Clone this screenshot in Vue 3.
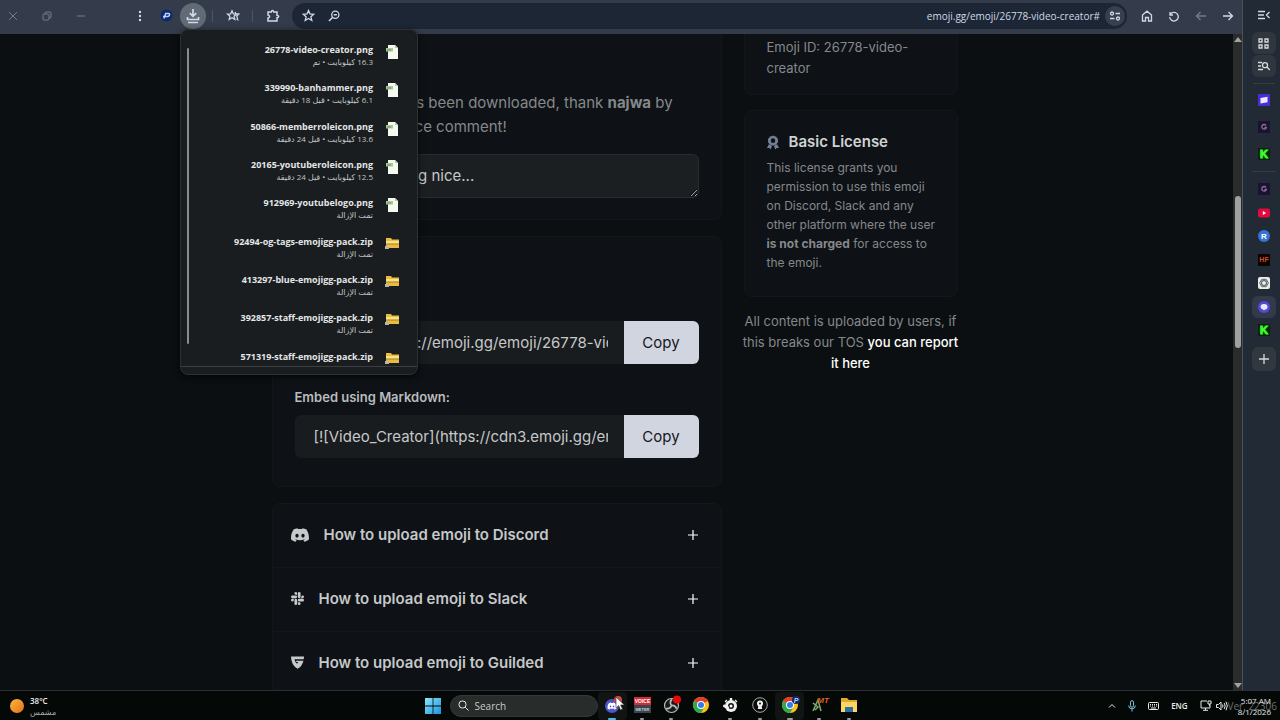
<script setup>
import { ref } from 'vue'

const comment = ref('')
const search = ref('')
const address = ref('emoji.gg/emoji/26778-video-creator#')

const embeds = [
    { id: 'html', label: 'Embed in HTML:', value: '<a href="https://emoji.gg/emoji/26778-video-creator"></a>' },
    { id: 'markdown', label: 'Embed using Markdown:', value: '[![Video_Creator](https://cdn3.emoji.gg/emojis/26778-video-creator.png)]' }
]

const guides = [
    { icon: 'discord', title: 'How to upload emoji to Discord' },
    { icon: 'slack', title: 'How to upload emoji to Slack' },
    { icon: 'guilded', title: 'How to upload emoji to Guilded' }
]

const downloads = [
    { name: '26778-video-creator.png', info: '16.3 كيلوبايت • تم' },
    { name: '339990-banhammer.png', info: '6.1 كيلوبايت • قبل 18 دقيقة' },
    { name: '50866-memberroleicon.png', info: '13.6 كيلوبايت • قبل 24 دقيقة' },
    { name: '20165-youtuberoleicon.png', info: '12.5 كيلوبايت • قبل 24 دقيقة' },
    { name: '912969-youtubelogo.png', info: 'تمت الإزالة' },
    { name: '92494-og-tags-emojigg-pack.zip', info: 'تمت الإزالة', zip: true },
    { name: '413297-blue-emojigg-pack.zip', info: 'تمت الإزالة', zip: true },
    { name: '392857-staff-emojigg-pack.zip', info: 'تمت الإزالة', zip: true },
    { name: '571319-staff-emojigg-pack.zip', info: 'تمت الإزالة', zip: true }
]

const pinned = ['purple', 'ring', 'kick']
const tabs = ['ring', 'youtube', 'r', 'hf', 'gpt', 'chat', 'kick']
const apps = ['discord', 'voice', 'obs', 'chrome', 'steel', 'lock', 'chromep', 'mt', 'folder']
const running = ['discord', 'voice', 'obs', 'steel', 'lock', 'chromep', 'mt', 'folder']

const discordPath = 'M20.317 4.37a19.8 19.8 0 00-4.885-1.515.074.074 0 00-.079.037c-.21.375-.444.865-.608 1.25-1.845-.276-3.68-.276-5.487 0-.164-.393-.406-.874-.618-1.25a.077.077 0 00-.078-.037 19.74 19.74 0 00-4.885 1.515.07.07 0 00-.032.028C.533 9.046-.319 13.58.099 18.058a.082.082 0 00.031.056c2.053 1.508 4.041 2.423 5.993 3.03a.078.078 0 00.084-.028c.462-.63.873-1.295 1.226-1.994a.076.076 0 00-.042-.106c-.652-.248-1.274-.55-1.872-.892a.077.077 0 01-.008-.128c.126-.094.252-.192.372-.291a.074.074 0 01.078-.01c3.928 1.793 8.18 1.793 12.061 0a.074.074 0 01.079.009c.12.099.246.198.373.292a.077.077 0 01-.007.128 12.3 12.3 0 01-1.873.891.077.077 0 00-.041.107c.36.698.772 1.363 1.225 1.993a.076.076 0 00.084.029c1.961-.607 3.95-1.522 6.002-3.03a.077.077 0 00.032-.055c.5-5.177-.838-9.674-3.549-13.66a.061.061 0 00-.031-.029zM8.02 15.331c-1.183 0-2.157-1.086-2.157-2.419s.956-2.419 2.157-2.419c1.21 0 2.176 1.095 2.157 2.419 0 1.333-.956 2.419-2.157 2.419zm7.975 0c-1.183 0-2.157-1.086-2.157-2.419s.955-2.419 2.157-2.419c1.21 0 2.176 1.095 2.157 2.419 0 1.333-.946 2.419-2.157 2.419z'
const slackPath = 'M5.042 15.165a2.528 2.528 0 0 1-2.52 2.523A2.528 2.528 0 0 1 0 15.165a2.527 2.527 0 0 1 2.522-2.52h2.52v2.52zM6.313 15.165a2.527 2.527 0 0 1 2.521-2.52 2.527 2.527 0 0 1 2.521 2.52v6.313A2.528 2.528 0 0 1 8.834 24a2.528 2.528 0 0 1-2.521-2.522v-6.313zM8.834 5.042a2.528 2.528 0 0 1-2.521-2.52A2.528 2.528 0 0 1 8.834 0a2.528 2.528 0 0 1 2.521 2.522v2.52H8.834zM8.834 6.313a2.528 2.528 0 0 1 2.521 2.521 2.528 2.528 0 0 1-2.521 2.521H2.522A2.528 2.528 0 0 1 0 8.834a2.528 2.528 0 0 1 2.522-2.521h6.312zM18.956 8.834a2.528 2.528 0 0 1 2.522-2.521A2.528 2.528 0 0 1 24 8.834a2.528 2.528 0 0 1-2.522 2.521h-2.522V8.834zM17.688 8.834a2.528 2.528 0 0 1-2.523 2.521 2.527 2.527 0 0 1-2.52-2.521V2.522A2.527 2.527 0 0 1 15.165 0a2.528 2.528 0 0 1 2.523 2.522v6.312zM15.165 18.956a2.528 2.528 0 0 1 2.523 2.522A2.528 2.528 0 0 1 15.165 24a2.527 2.527 0 0 1-2.52-2.522v-2.522h2.52zM15.165 17.688a2.527 2.527 0 0 1-2.52-2.523 2.526 2.526 0 0 1 2.52-2.52h6.313A2.527 2.527 0 0 1 24 15.165a2.528 2.528 0 0 1-2.522 2.523h-6.313z'
</script>

<template>
    <div class="desktop">
        <div class="window">
            <div class="browser">
                <header class="toolbar">
                    <div class="win-buttons">
                        <button aria-label="Close"><svg width="10" height="10" viewBox="0 0 10 10"><path d="M1 1l8 8M9 1L1 9" /></svg></button>
                        <button aria-label="Restore"><svg width="10" height="10" viewBox="0 0 10 10"><rect x="1" y="3" width="6" height="6" rx="1" /><path d="M3 3V2q0-1 1-1h4q1 0 1 1v4q0 1-1 1H7" /></svg></button>
                        <button aria-label="Minimize"><svg width="10" height="10" viewBox="0 0 10 10"><path d="M1 5h8" /></svg></button>
                    </div>
                    <div class="tools">
                        <button aria-label="Menu"><svg class="solid" width="4" height="12" viewBox="0 0 4 12"><circle cx="2" cy="2" r="1.2" /><circle cx="2" cy="6" r="1.2" /><circle cx="2" cy="10" r="1.2" /></svg></button>
                        <button aria-label="Profile">
                            <svg width="13" height="13" viewBox="0 0 13 13"><circle cx="6.5" cy="6.5" r="6" fill="#0d2a70" stroke="none" /><path d="M4 9.500l1.700-5h2.800q1.500.2 1 1.500-.5 1.400-1.900 1.400H3" stroke="#b9d4f5" stroke-width="1.5" /></svg>
                        </button>
                        <button class="active" aria-label="Downloads"><svg width="14" height="16" viewBox="0 0 14 16"><path d="M7 1v7M3.800 5.200L7 8.400l3.200-3.200M1.500 9v2.500h11V9M2 14.500h10" stroke-width="1.7" /></svg></button>
                        <i class="split"></i>
                        <button aria-label="Bookmarks"><svg width="14" height="14" viewBox="0 0 14 14"><path d="M6 1.800l1.300 3 3.200.3-2.400 2.200.7 3.200L6 8.800l-2.800 1.700.7-3.200L1.500 5.100l3.200-.3zM9 3l.8 1.600 3 .4-2 2 .8 3.600-1-.6" /></svg></button>
                        <i class="split"></i>
                        <button aria-label="Extensions"><svg width="14" height="14" viewBox="0 0 14 14"><path d="M2 3h3.300q.2-1.600 1.200-1.600T7.700 3H11v3.300q1.700.2 1.700 1.200T11 8.700V12H2V9q1.600-.3 1.600-1.500T2 6z" stroke-width="1.5" /></svg></button>
                    </div>
                    <div class="omnibox">
                        <button aria-label="Bookmark this page"><svg width="13" height="13" viewBox="0 0 13 13"><path d="M6.500 1.500L8 5l3.800.3-2.900 2.500.9 3.700-3.300-2-3.300 2 .9-3.700L1.200 5.300 5 5z" /></svg></button>
                        <button aria-label="Zoom"><svg width="12" height="12" viewBox="0 0 12 12"><circle cx="7.3" cy="4.7" r="3.6" /><path d="M4.700 7.300L1 11M5.700 4.700h3.200" stroke-width="1.5" /></svg></button>
                        <input v-model="address" aria-label="Address" type="text">
                        <button class="site" aria-label="Site information"><svg width="12" height="10" viewBox="0 0 12 10"><circle cx="3" cy="2.5" r="1.5" /><path d="M6.500 2.500H11M1 7.500h4.500" stroke-width="1.5" /><circle cx="9" cy="7.5" r="1.5" /></svg></button>
                    </div>
                    <nav class="nav">
                        <button aria-label="Home"><svg width="12" height="12" viewBox="0 0 12 12"><path d="M1.500 5L6 1.200 10.500 5v6H7.500V7.500h-3V11h-3z" /></svg></button>
                        <button aria-label="Reload"><svg width="12" height="12" viewBox="0 0 12 12"><path d="M2 2v3h3M2.200 4.700A4.300 4.300 0 1 1 1.700 7" /></svg></button>
                        <button class="dim" aria-label="Forward"><svg width="12" height="12" viewBox="0 0 12 12"><path d="M11 6H2M5.500 2L1.500 6l4 4" /></svg></button>
                        <button aria-label="Back"><svg width="12" height="12" viewBox="0 0 12 12"><path d="M1 6h9M6.500 2l4 4-4 4" /></svg></button>
                    </nav>
                </header>

                <div class="viewport">
                    <div class="page">
                        <main class="main">
                            <section class="card thanks">
                                <p>Video_Creator has been downloaded, thank <b>najwa</b> by leaving them a nice comment!</p>
                                <textarea v-model="comment" rows="1" aria-label="Comment" placeholder="Say something nice..."></textarea>
                            </section>

                            <section class="card share">
                                <h2>Embed</h2>
                                <div v-for="e in embeds" :key="e.id" class="field">
                                    <label :for="e.id">{{ e.label }}</label>
                                    <div class="copy-row">
                                        <input :id="e.id" type="text" readonly :value="e.value">
                                        <button>Copy</button>
                                    </div>
                                </div>
                            </section>

                            <section class="card guides">
                                <button v-for="g in guides" :key="g.icon">
                                    <svg v-if="g.icon == 'discord'" width="18" height="18" viewBox="0 0 24 24"><path :d="discordPath" /></svg>
                                    <svg v-else-if="g.icon == 'slack'" width="13" height="13" viewBox="0 0 24 24"><path :d="slackPath" /></svg>
                                    <svg v-else width="13" height="13" viewBox="0 0 24 24"><path d="M0 1h24q0 3-.6 5.200H6.500q.8 5 4.500 8.300l2.500-3.300h-4V8.600H23Q20.500 19 12 23.500 0 16.500 0 1z" /></svg>
                                    <span>{{ g.title }}</span>
                                    <svg class="plus" width="10" height="10" viewBox="0 0 10 10"><path d="M5 0v10M0 5h10" /></svg>
                                </button>
                            </section>
                        </main>

                        <aside class="side">
                            <section class="card info">Emoji ID: 26778-video-creator</section>
                            <section class="card license">
                                <h3>
                                    <svg width="12" height="15" viewBox="0 0 13 15"><path fill-rule="evenodd" d="M6.500 0l1.600.7 1.800.2.800 1.600 1.300 1.200-.2 1.800.2 1.800-1.300 1.200-.8 1.500-1.800.3-1.600.7-1.600-.7-1.800-.3-.8-1.500L1 7.300l.2-1.800L1 3.700l1.300-1.200.8-1.600 1.800-.2zm0 3a2.500 2.500 0 1 0 0 5 2.500 2.500 0 0 0 0-5z" /><path d="M2 9.500l3.500 1.600L4 15l-1.400-1.500L0 13.500zM11 9.500l-3.500 1.600L9 15l1.400-1.500 2.600 0z" /></svg>
                                    Basic License
                                </h3>
                                <p>This license grants you permission to use this emoji on Discord, Slack and any other platform where the user <b>is not charged</b> for access to the emoji.</p>
                            </section>
                            <p class="report">All content is uploaded by users, if this breaks our TOS <a href="#">you can report it here</a></p>
                        </aside>
                    </div>
                    <div class="scrollbar">
                        <svg width="8" height="5" viewBox="0 0 8 5"><path d="M4 0l4 5H0z" /></svg>
                        <div class="thumb"></div>
                        <svg width="8" height="5" viewBox="0 0 8 5"><path d="M4 5l4-5H0z" /></svg>
                    </div>
                </div>

                <!-- downloads bubble, drawn over the page -->
                <div class="bubble" dir="rtl">
                    <div class="bubble-view">
                        <ul>
                            <li v-for="d in downloads" :key="d.name">
                                <svg v-if="d.zip" width="14" height="12" viewBox="0 0 14 12"><path d="M1 1h5l1 1.500h7V11H1z" fill="#e9bc3e" /><path d="M1 4h13v3H1z" fill="#f9e08a" /><path d="M1 6.500h13v1H1z" fill="#a57e22" /><path d="M0 9h4v3H0z" fill="#b9b5a6" /></svg>
                                <svg v-else width="14" height="14" viewBox="0 0 14 14"><path d="M3 0h7l3 3v11H3z" fill="#f4faf0" /><path d="M10 0v3h3z" fill="#b7c6b0" /><path d="M1 3h7v3.500H1z" fill="#a9c79a" /><path d="M2 5h4" stroke="#6b8f5d" /></svg>
                                <div class="file">
                                    <b dir="ltr">{{ d.name }}</b>
                                    <span>{{ d.info }}</span>
                                </div>
                            </li>
                        </ul>
                        <div class="bubble-thumb"></div>
                    </div>
                </div>
            </div>

            <aside class="rail">
                <button aria-label="Collapse"><svg width="12" height="10" viewBox="0 0 12 10"><path d="M0 1.500h7M0 5h6M0 8.500h7M11.500 2L8.500 5l3 3" /></svg></button>
                <div class="pair">
                    <button aria-label="Tab groups"><svg width="11" height="11" viewBox="0 0 11 11"><path d="M1 1h3v3H1zM7 1h3v3H7zM1 7h3v3H1zM7 7h3v3H7z" /></svg></button>
                    <button aria-label="Search tabs"><svg width="12" height="10" viewBox="0 0 12 10"><path d="M0 1.500h4M0 5h3M0 8.500h5" /><circle cx="7" cy="4.2" r="2.5" /><path d="M9 6l2.800 3" /></svg></button>
                </div>
                <i></i>
                <div v-for="(group, n) in [pinned, tabs]" :key="n" :class="['group', n ? 'tabs' : 'pinned']">
                    <button v-for="t in group" :key="t" :class="{ current: t == 'chat' }" :aria-label="t">
                        <svg width="12" height="12" viewBox="0 0 12 12">
                            <template v-if="t == 'purple'"><rect width="12" height="12" rx="1" fill="#4a2bd8" /><path d="M2.500 4l7-1.300v5.500l-7 1.300z" fill="#eceaff" /></template>
                            <template v-else-if="t == 'ring'"><rect width="12" height="12" fill="#1c1332" /><path d="M8 4.500a2.300 2.300 0 1 0 .3 2H6.500" fill="none" stroke="#8d6f9c" stroke-width="1.3" /></template>
                            <template v-else-if="t == 'kick'"><rect width="12" height="12" fill="#07240a" /><text x="6" y="10" text-anchor="middle" font-size="11" font-weight="900" fill="#3dfb2c" stroke="#3dfb2c">K</text></template>
                            <template v-else-if="t == 'youtube'"><rect y="1.5" width="12" height="9" rx="2" fill="#e3083f" /><path d="M4.800 4v4l3.300-2z" fill="#fff" /></template>
                            <template v-else-if="t == 'r'"><circle cx="6" cy="6" r="6" fill="#3673d9" /><text x="6" y="9" text-anchor="middle" font-size="8" font-weight="700" fill="#fff">R</text></template>
                            <template v-else-if="t == 'hf'"><rect width="12" height="12" fill="#0a0504" /><text x="6" y="8" text-anchor="middle" font-size="7" font-weight="700" fill="#d64a1c">HF</text></template>
                            <template v-else-if="t == 'gpt'"><rect width="12" height="12" rx="2" fill="#e9ecec" /><g fill="none" stroke="#555c5e" stroke-width=".8"><ellipse cx="6" cy="6" rx="4.3" ry="2.3" /><ellipse cx="6" cy="6" rx="4.3" ry="2.3" transform="rotate(60 6 6)" /><ellipse cx="6" cy="6" rx="4.3" ry="2.3" transform="rotate(120 6 6)" /></g></template>
                            <template v-else><circle cx="6" cy="6" r="6" fill="#524bd1" /><path d="M6 3q3.500 0 3.500 2.700T7 8.400L6 9.500 5 8.400Q2.500 8 2.500 5.700T6 3z" fill="#e9e8ff" /></template>
                        </svg>
                    </button>
                </div>
                <button class="add" aria-label="New tab"><svg width="10" height="10" viewBox="0 0 10 10"><path d="M5 0v10M0 5h10" /></svg></button>
            </aside>
        </div>

        <footer class="taskbar">
            <div class="weather">
                <svg width="14" height="14" viewBox="0 0 14 14"><defs><linearGradient id="sun" x2="1" y2="1"><stop stop-color="#f8b83c" /><stop offset="1" stop-color="#e86f1a" /></linearGradient></defs><circle cx="7" cy="7" r="7" fill="url(#sun)" /></svg>
                <div><b>38°C</b><span>مشمس</span></div>
            </div>

            <div class="center">
                <button class="start" aria-label="Start"><svg width="16" height="16" viewBox="0 0 16 16"><defs><linearGradient id="win" x2="1" y2="1"><stop stop-color="#8be6fb" /><stop offset="1" stop-color="#1b93dd" /></linearGradient></defs><path d="M0 0h7.600v7.600H0zM8.400 0H16v7.600H8.400zM0 8.400h7.600V16H0zM8.400 8.400H16V16H8.400z" fill="url(#win)" /></svg></button>
                <label class="search">
                    <svg width="11" height="11" viewBox="0 0 11 11"><circle cx="4.5" cy="4.5" r="3.6" /><path d="M7.200 7.200L10.500 10.500" /></svg>
                    <input v-model="search" type="text" placeholder="Search" aria-label="Search">
                </label>
                <div class="apps">
                    <button v-for="a in apps" :key="a" :class="[a, { running: running.includes(a) }]" :aria-label="a">
                        <svg width="20" height="20" viewBox="0 0 20 20">
                            <template v-if="a == 'discord'"><circle cx="10" cy="11" r="7" fill="#4d55c8" /><path :d="discordPath" transform="translate(5.5 6.5) scale(.38)" fill="#fff" /><circle cx="16" cy="5" r="4" fill="#cf4a45" /></template>
                            <template v-else-if="a == 'voice'"><rect x="2" y="2" width="17" height="8" fill="#d22c35" /><rect x="2" y="10" width="17" height="8" fill="#39444f" /><text x="10.5" y="8" text-anchor="middle" font-size="5" font-weight="700" fill="#fff">VOICE</text><text x="10.5" y="16" text-anchor="middle" font-size="4" font-weight="700" fill="#c6ccd2">METER</text></template>
                            <template v-else-if="a == 'obs'"><circle cx="10.5" cy="10.5" r="7" fill="#17191a" stroke="#b8babb" stroke-width="1.2" /><path d="M10.500 10.500Q8 7 11 4.500M10.500 10.500q4-.4 5 3.300M10.500 10.500Q9 14.500 5 13.500" fill="none" stroke="#b8babb" stroke-width="1.7" /><circle cx="16" cy="4.5" r="4" fill="#ee0505" /></template>
                            <template v-else-if="a == 'chrome' || a == 'chromep'">
                                <circle cx="10" cy="10" r="8" fill="#fbc116" /><path d="M10 10L3.100 6a8 8 0 0 1 13.800 0z" fill="#e33b2e" /><path d="M10 10L3.100 6A8 8 0 0 0 10 18l3.500-6z" fill="#2da94f" /><circle cx="10" cy="10" r="4" fill="#fff" /><circle cx="10" cy="10" r="3" fill="#3779e4" />
                                <template v-if="a == 'chromep'"><circle cx="16" cy="5" r="4" fill="#0d2a70" /><text x="16" y="8" text-anchor="middle" font-size="7" font-weight="700" font-style="italic" fill="#b9d4f5">P</text></template>
                            </template>
                            <template v-else-if="a == 'steel'"><circle cx="11" cy="11" r="6" fill="#f1f1f1" /><path d="M11 3v3M15.500 6.500l1-1M6.500 6.500l-1-1" stroke="#f1f1f1" stroke-width="2.5" /><circle cx="11" cy="11" r="3" fill="#101312" /><circle cx="11" cy="11" r="1.5" fill="#fff" /><path d="M4.500 11l3 1.500" stroke="#f1f1f1" stroke-width="3" stroke-linecap="round" /></template>
                            <template v-else-if="a == 'lock'"><circle cx="10" cy="10" r="7.3" fill="#0b0d0d" stroke="#a6a8a8" /><circle cx="10" cy="8.5" r="3" fill="#f1f1f1" /><path d="M8.500 10h3l.7 4H7.800z" fill="#f1f1f1" /><circle cx="10" cy="8.5" r="1" fill="#0b0d0d" /></template>
                            <template v-else-if="a == 'mt'"><path d="M4 16L9 5l3 11M4 8l5 4-3 3" fill="none" stroke="#7fae74" stroke-width="1.5" /><text x="14" y="8" text-anchor="middle" font-size="8" font-weight="700" font-style="italic" fill="#e0631f">MT</text></template>
                            <template v-else><path d="M2 3h6l2 2h8v12H2z" fill="#e2a92b" /><path d="M2 7h16v10H2z" fill="#fbd75f" /><path d="M6 12h8v5H6z" fill="#2b6ea8" /></template>
                        </svg>
                    </button>
                </div>
            </div>

            <div class="tray">
                <svg width="8" height="5" viewBox="0 0 8 5"><path d="M1 4.500l3-3 3 3" /></svg>
                <svg class="mic" width="8" height="12" viewBox="0 0 8 12"><rect x="2.5" y=".7" width="3" height="6.5" rx="1.5" /><path d="M.7 5.500a3.300 3.300 0 0 0 6.600 0M4 9v2.500" /></svg>
                <svg width="11" height="8" viewBox="0 0 11 8"><rect x=".5" y=".5" width="10" height="7" rx="1" /><path d="M2 2.500h7M2 4h7" stroke-dasharray="1 1" /><path d="M3 6h5" /></svg>
                <span class="lang">ENG</span>
                <svg width="12" height="11" viewBox="0 0 12 11"><path d="M7 1H1v7h9V5M3 10.300h5M5.500 8v2M8 1h3v3H8zM9.500 4v2" /></svg>
                <svg width="12" height="10" viewBox="0 0 12 10"><path d="M.5 3.500h2L5 1v8L2.500 6.500h-2zM6.500 3.500q1 1.500 0 3M8.200 2q2 3 0 6M10 .7q2.600 4.300 0 8.600" /></svg>
                <div class="clock">
                    <span class="version">Ver. 22306</span>
                    <time>5:07 AM<br>8/1/2026</time>
                </div>
            </div>

            <svg class="pointer" width="10" height="15" viewBox="0 0 10 15"><path d="M1 1v11l2.700-2.400L5.500 14l2-.9-1.900-4.200H9.300z" fill="#fff" stroke="#333" stroke-width=".6" /></svg>
        </footer>
    </div>
</template>

<style>
body {
    background: #0b0f11;
    color-scheme: dark;
}
</style>

<style scoped>
* {
    box-sizing: border-box;
}

button {
    padding: 0;
    border: 0;
    background: none;
    color: inherit;
    font: inherit;
    cursor: pointer;
    display: flex;
    align-items: center;
    justify-content: center;
}

input, textarea {
    border: 0;
    outline: 0;
    background: none;
    color: inherit;
    font: inherit;
}

h2, h3, p, ul {
    margin: 0;
    padding: 0;
}

.desktop {
    display: flex;
    flex-direction: column;
    height: 100vh;
    overflow: hidden;
    font-family: Inter, "Noto Sans", sans-serif;
    color: #d0d2d4;
}

.window {
    flex: 1;
    min-height: 0;
    display: flex;
    border-bottom: 1px solid #2b2f34;
}

.browser {
    position: relative;
    flex: 1;
    min-width: 0;
    display: flex;
    flex-direction: column;
    border-right: 1px solid #49515e;
}

/* toolbar */
.toolbar {
    height: 34px;
    padding-bottom: 3px;
    display: flex;
    align-items: center;
    background: #343c4c;
    color: #cfd9e8;
}

.toolbar svg, .rail > button svg, .pair svg {
    fill: none;
    stroke: currentColor;
    stroke-width: 1.3;
}

.toolbar svg.solid {
    fill: currentColor;
    stroke: none;
}

.win-buttons {
    display: flex;
    gap: 8px;
    color: #747d8c;
}

.win-buttons button {
    width: 26px;
    height: 26px;
}

.win-buttons svg {
    stroke-width: 1;
}

.tools {
    display: flex;
    align-items: center;
    margin: 0 6px 0 32px;
}

.tools button, .nav button {
    width: 27px;
    height: 26px;
}

.tools .active {
    width: 26px;
    border-radius: 50%;
    background: #616b75;
}

.split {
    width: 1px;
    height: 12px;
    margin: 0 6px;
    background: #4a5464;
}

.omnibox {
    flex: 1;
    height: 26px;
    display: flex;
    align-items: center;
    padding: 0 2px 0 4px;
    border-radius: 13px;
    background: #1c2635;
}

.omnibox button {
    width: 25px;
    height: 20px;
}

.omnibox input {
    flex: 1;
    min-width: 0;
    padding: 0 5px;
    text-align: right;
    font-family: "Open Sans", sans-serif;
    font-size: 10px;
}

.omnibox .site {
    width: 20px;
    border-radius: 50%;
    background: #374050;
}

.nav {
    display: flex;
    margin: 0 1px 0 6px;
}

.nav .dim {
    color: #727c8b;
}

/* page */
.viewport {
    flex: 1;
    min-height: 0;
    display: flex;
    background: #0b0f11;
}

.page {
    flex: 1;
    display: flex;
    justify-content: center;
    gap: 22px;
    padding-right: 4px;
    overflow: hidden;
}

.main {
    width: 450px;
    display: flex;
    flex-direction: column;
    gap: 16px;
}

.card {
    flex-shrink: 0;
    padding: 0 22px;
    border: 1px solid #13171a;
    border-radius: 8px;
    background: #0e1216;
}

.thanks {
    padding-top: 57px;
    padding-bottom: 21px;
    border-top: 0;
    border-radius: 0 0 8px 8px;
    font-size: 15px;
    line-height: 24px;
    color: #85888b;
}

.thanks textarea {
    display: block;
    width: 100%;
    height: 44px;
    margin-top: 15px;
    padding: 9px 27px;
    border: 1px solid #282c2f;
    border-radius: 6px;
    background: #1b1f21;
    color: #d0d2d4;
}

.thanks textarea::placeholder {
    color: #c6c8ca;
}

.share {
    padding-top: 20px;
    padding-bottom: 28px;
}

.share h2 {
    font-size: 18px;
    line-height: 24px;
    margin-bottom: 10px;
}

.field + .field {
    margin-top: 21px;
}

.field label {
    display: block;
    margin-bottom: 6px;
    font-size: 13px;
    line-height: 24px;
    font-weight: 600;
    color: #b9bcbe;
}

.copy-row {
    display: flex;
    height: 43px;
    border-radius: 6px;
    overflow: hidden;
    background: #181c1e;
}

.copy-row input {
    flex: 1;
    min-width: 0;
    padding: 0 16px 0 19px;
    font-size: 15px;
    color: #c6c8ca;
}

.copy-row button {
    width: 75px;
    background: #d1d5e0;
    color: #15181c;
    font-size: 15px;
}

.guides {
    padding: 0;
}

.guides button {
    width: 100%;
    height: 64px;
    padding: 0 23px 2px 18px;
    justify-content: flex-start;
    gap: 15px;
    border-bottom: 1px solid #13171a;
    font-size: 15px;
    font-weight: 600;
    color: #c6c8ca;
}

.guides svg {
    fill: #c6c8ca;
}

.guides .plus {
    margin-left: auto;
    stroke: #fff;
    stroke-width: 1.2;
}

.side {
    width: 214px;
    font-size: 13px;
    line-height: 21px;
    color: #85888b;
}

.info {
    padding-top: 3px;
    padding-bottom: 15px;
    border-top: 0;
    border-radius: 0 0 8px 8px;
}

.license {
    margin: 15px 0 14px;
    padding: 20px 16px 24px 22px;
}

.license h3 {
    display: flex;
    align-items: center;
    gap: 10px;
    margin-bottom: 5px;
    font-size: 15px;
    line-height: 22px;
    font-weight: 600;
    color: #d0d2d4;
}

.license svg {
    fill: #738095;
}

.license p {
    font-size: 12px;
    line-height: 19px;
}

.report {
    margin: 0 -4px;
    text-align: center;
}

.report a {
    color: #fff;
    font-weight: 500;
    text-decoration: none;
}

.scrollbar {
    width: 9px;
    padding: 3px 0 2px;
    display: flex;
    flex-direction: column;
    align-items: center;
    background: #2a2c2b;
}

.scrollbar svg {
    fill: #a0a3a0;
}

.scrollbar .thumb {
    width: 6px;
    height: 152px;
    margin: 154px 0 auto;
    border-radius: 3px;
    background: #9da09d;
}

/* downloads bubble */
.bubble {
    position: absolute;
    left: 180px;
    top: 29px;
    width: 238px;
    padding-bottom: 7px;
    border: 1px solid #2b3033;
    border-radius: 8px;
    background: #191d1f;
    box-shadow: 0 2px 6px #000a;
    font-family: "Open Sans", "DejaVu Sans", sans-serif;
    color: #e4e6e7;
}

.bubble-view {
    position: relative;
    height: 337px;
    padding-top: 6px;
    overflow: hidden;
    border-bottom: 1px solid #3a3f42;
}

.bubble ul {
    height: 345px;
    display: flex;
    flex-direction: column;
    list-style: none;
}

.bubble li {
    flex: 1;
    display: flex;
    align-items: flex-start;
    gap: 12px;
    padding: 9px 18px 0 0;
}

.bubble li svg {
    flex-shrink: 0;
}

.file {
    display: flex;
    flex-direction: column;
    align-items: flex-start;
    margin-top: -2px;
}

.file b {
    font-size: 9px;
    line-height: 13px;
    font-weight: 700;
}

.file span {
    font-size: 8px;
    line-height: 12px;
    color: #c2c5c6;
}

.bubble-thumb {
    position: absolute;
    left: 6px;
    top: 18px;
    width: 2px;
    height: 296px;
    border-radius: 1px;
    background: #888c8e;
}

/* right rail */
.rail {
    width: 37px;
    padding: 4px 0 0 4px;
    display: flex;
    flex-direction: column;
    align-items: center;
    background: #222a35;
    color: #d6dadd;
}

.rail button {
    width: 24px;
    height: 22px;
    border-radius: 6px;
}

.pair {
    display: flex;
    flex-direction: column;
    gap: 1px;
    margin-top: 6px;
}

.pair button {
    background: #2f363e;
}

.rail > i {
    width: 22px;
    height: 1px;
    margin-top: 6px;
    background: #353d42;
}

.group {
    display: flex;
    flex-direction: column;
    justify-content: space-between;
}

.pinned {
    height: 76px;
    margin-top: 5px;
}

.tabs {
    height: 170px;
    margin-top: 6px;
    padding-top: 6px;
    border-top: 1px solid #353d42;
}

.rail .current {
    background: #343a4e;
}

.rail .add {
    height: 24px;
    margin-top: 6px;
    background: #31383e;
}

.rail text, .apps text {
    font-family: "Liberation Sans", sans-serif;
}

/* taskbar */
.taskbar {
    position: relative;
    height: 29px;
    padding-left: 5px;
    display: grid;
    grid-template-columns: 1fr auto 1fr;
    align-items: center;
    background: #040806;
    font-family: "Open Sans", "DejaVu Sans", sans-serif;
    color: #e8eaea;
}

.weather {
    display: flex;
    align-items: center;
    gap: 6px;
    padding-left: 5px;
    font-size: 8px;
    line-height: 11px;
}

.weather div {
    display: flex;
    flex-direction: column;
}

.weather b {
    font-weight: 600;
}

.weather span {
    color: #a8abab;
}

.center {
    display: flex;
    align-items: center;
}

.start {
    width: 22px;
    margin-right: 6px;
}

.search {
    width: 148px;
    height: 22px;
    display: flex;
    align-items: center;
    gap: 6px;
    padding: 0 7px;
    border: 1px solid #343836;
    border-radius: 11px;
    background: #282c2a;
}

.search svg, .tray svg {
    flex-shrink: 0;
    fill: none;
    stroke: #e8eaea;
}

.search input {
    width: 100%;
    padding: 0;
    font-size: 10px;
}

.search input::placeholder {
    color: #c8cbca;
}

.apps {
    width: 266px;
    display: grid;
    grid-template-columns: repeat(9, 1fr);
}

.apps button {
    position: relative;
    height: 28px;
    padding-bottom: 1px;
}

.apps .discord, .apps .chromep {
    background: #101413;
    border-radius: 4px;
}

.apps svg {
    overflow: visible;
}

.apps .running::after {
    content: "";
    position: absolute;
    bottom: 0;
    width: 4px;
    height: 2px;
    border-radius: 1px;
    background: #999c9c;
}

.apps .discord::after {
    width: 8px;
    background: #57b5ec;
}

.apps .chromep::after {
    width: 6px;
}

.tray {
    display: flex;
    align-items: center;
    justify-content: flex-end;
    gap: 12px;
    padding-right: 9px;
    font-size: 8px;
}

.tray .mic {
    stroke: #7fc4d8;
}

.lang {
    font-weight: 600;
}

.lang + svg + svg {
    margin-left: -8px;
}

.clock {
    position: relative;
    margin-left: -2px;
    text-align: right;
    line-height: 11px;
}

.version {
    position: absolute;
    right: -6px;
    top: 6px;
    font-size: 10px;
    color: #6c706f;
    white-space: nowrap;
}

.clock time {
    position: relative;
    display: block;
}

.pointer {
    position: absolute;
    left: 615px;
    top: 5px;
}
</style>
